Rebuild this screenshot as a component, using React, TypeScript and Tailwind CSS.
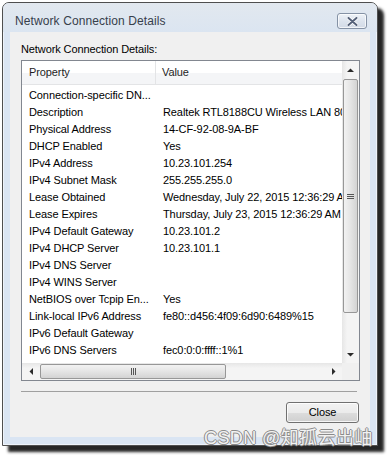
import React from 'react';

const rows: [string, string][] = [
  ['Connection-specific DN...', ''],
  ['Description', 'Realtek RTL8188CU Wireless LAN 802.11n USB 2.0 Network Adapter'],
  ['Physical Address', '14-CF-92-08-9A-BF'],
  ['DHCP Enabled', 'Yes'],
  ['IPv4 Address', '10.23.101.254'],
  ['IPv4 Subnet Mask', '255.255.255.0'],
  ['Lease Obtained', 'Wednesday, July 22, 2015 12:36:29 AM'],
  ['Lease Expires', 'Thursday, July 23, 2015 12:36:29 AM'],
  ['IPv4 Default Gateway', '10.23.101.2'],
  ['IPv4 DHCP Server', '10.23.101.1'],
  ['IPv4 DNS Server', ''],
  ['IPv4 WINS Server', ''],
  ['NetBIOS over Tcpip En...', 'Yes'],
  ['Link-local IPv6 Address', 'fe80::d456:4f09:6d90:6489%15'],
  ['IPv6 Default Gateway', ''],
  ['IPv6 DNS Servers', 'fec0:0:0:ffff::1%1'],
  ['', 'fec0:0:0:ffff::2%1'],
  ['', 'fec0:0:0:ffff::3%1'],
];

const Arrow = ({ dir }: { dir: 'up' | 'down' | 'left' | 'right' }) => {
  const pts = {
    up: '0,4 3.5,0.5 7,4',
    down: '0,0 3.5,3.5 7,0',
    left: '4,0 0.5,3.5 4,7',
    right: '0,0 3.5,3.5 0,7',
  }[dir];
  const vertical = dir === 'up' || dir === 'down';
  return (
    <svg width={vertical ? 7 : 4} height={vertical ? 4 : 7} viewBox={vertical ? '0 0 7 4' : '0 0 4 7'}>
      <polygon points={pts} fill="#2b2b2b" />
    </svg>
  );
};

const App = () => {
  return (
    <div className="relative h-[457px] w-[390px] overflow-hidden bg-white font-['Liberation_Sans',Arial,sans-serif] text-[11px] text-black">
      <div className="ml-[2px] mt-[2px] flex h-[444px] w-[376px] flex-col rounded-t-[7px] border border-[#4f4f4f] bg-[#dae5f3] shadow-[6px_6px_3px_rgba(0,0,0,0.85),inset_0_0_0_1px_rgba(255,255,255,0.55)]">
        {/* title bar */}
        <div className="flex h-[29px] shrink-0 items-start justify-between rounded-t-[6px] bg-[linear-gradient(#e2e8ef,#dbe5f1)]">
          <span className="pl-[12px] pt-[10px] text-[12px] leading-[16px] tracking-[0.1px] text-[#37404c]">
            Network Connection Details
          </span>
          <div className="mr-[10px] mt-[10px] flex h-[16px] w-[30px] items-center justify-center rounded-[3px] border border-[#8592a5] bg-[linear-gradient(#eef2f7,#dde4ee_50%,#d2dae6)] shadow-[inset_0_0_0_1px_rgba(255,255,255,0.7)]">
            <svg width="11" height="9" viewBox="0 0 11 9">
              <path d="M1.5 1 L9.5 8 M9.5 1 L1.5 8" stroke="#ffffff" strokeWidth="3.6" strokeLinecap="round" />
              <path d="M1.5 1 L9.5 8 M9.5 1 L1.5 8" stroke="#56627a" strokeWidth="2" strokeLinecap="round" />
            </svg>
          </div>
        </div>

        {/* client area */}
        <div className="mx-[7px] mb-[8px] flex flex-1 flex-col bg-[#f0f0f0] pl-[11px] pr-[10px] pt-[11px]">
          <div className="h-[13px] leading-[13px] tracking-[-0.1px]">Network Connection Details:</div>

          <div className="mt-[4px] grid h-[321px] w-[339px] grid-cols-[1fr_17px] grid-rows-[1fr_17px] border border-[#828790] bg-white">
            {/* list content */}
            <div className="overflow-hidden">
              <div className="flex h-[24px] items-center border-b border-[#e3e4e6] bg-[linear-gradient(#ffffff_50%,#f4f5f7_50%)] text-[#1e1e1e]">
                <div className="flex h-full w-[134px] shrink-0 items-center border-r border-[#e3e4e6] pl-[7px] tracking-[-0.1px]">
                  Property
                </div>
                <div className="pl-[6px] tracking-[-0.1px]">Value</div>
              </div>
              <div className="pt-[2px]">
                {rows.map(([prop, value], i) => (
                  <div key={i} className="flex h-[17px] items-center whitespace-nowrap tracking-[-0.1px]">
                    <div className="w-[134px] shrink-0 overflow-hidden pl-[7px]">{prop}</div>
                    <div className="pl-[7px]">{value}</div>
                  </div>
                ))}
              </div>
            </div>

            {/* vertical scrollbar */}
            <div className="flex flex-col bg-[linear-gradient(90deg,#e6e6e6,#f4f4f4_30%,#f4f4f4)]">
              <div className="flex h-[17px] items-center justify-center">
                <Arrow dir="up" />
              </div>
              <div className="mx-[1px] mt-[1px] flex h-[234px] items-center justify-center rounded-[2px] border border-[#979797] bg-[linear-gradient(90deg,#f2f2f2,#e6e6e6_45%,#d3d3d3)]">
                <div className="flex flex-col gap-[1px]">
                  <div className="h-px w-[7px] bg-[#555]" />
                  <div className="h-px w-[7px] bg-[#555]" />
                  <div className="h-px w-[7px] bg-[#555]" />
                </div>
              </div>
              <div className="flex-1" />
              <div className="flex h-[17px] items-center justify-center">
                <Arrow dir="down" />
              </div>
            </div>

            {/* horizontal scrollbar */}
            <div className="flex bg-[linear-gradient(#e6e6e6,#f4f4f4_30%,#f4f4f4)]">
              <div className="flex w-[17px] items-center justify-center">
                <Arrow dir="left" />
              </div>
              <div className="my-[1px] ml-[1px] flex w-[186px] items-center justify-center rounded-[2px] border border-[#979797] bg-[linear-gradient(#f2f2f2,#e6e6e6_45%,#d3d3d3)]">
                <div className="flex gap-[1px]">
                  <div className="h-[7px] w-px bg-[#555]" />
                  <div className="h-[7px] w-px bg-[#555]" />
                  <div className="h-[7px] w-px bg-[#555]" />
                </div>
              </div>
              <div className="flex-1" />
              <div className="flex w-[17px] items-center justify-center">
                <Arrow dir="right" />
              </div>
            </div>

            <div className="bg-[#f0f0f0]" />
          </div>

          <div className="mt-[10px] h-px w-[336px] bg-[#a0a0a0]" />

          <div className="mt-[10px] flex w-[339px] justify-end pr-[1px]">
            <div className="flex h-[21px] w-[73px] items-center justify-center rounded-[3px] border border-[#707070] bg-[linear-gradient(#f2f2f2,#ebebeb_50%,#dddddd_50%,#cfcfcf)] shadow-[inset_0_0_0_1px_rgba(255,255,255,0.8)] tracking-[-0.1px]">
              Close
            </div>
          </div>
        </div>
      </div>

      {/* watermark */}
      <div className="absolute left-[204px] top-[427px] font-['Liberation_Sans','Noto_Sans_CJK_SC',sans-serif] text-[18px] leading-[22px] tracking-[0.4px] text-[#f2f2f2] [text-shadow:1px_0_0_#8a8a8a,-1px_0_0_#8a8a8a,0_1px_0_#8a8a8a,0_-1px_0_#8a8a8a]">
        CSDN @知孤云出岫
      </div>
    </div>
  );
};

export default App;
